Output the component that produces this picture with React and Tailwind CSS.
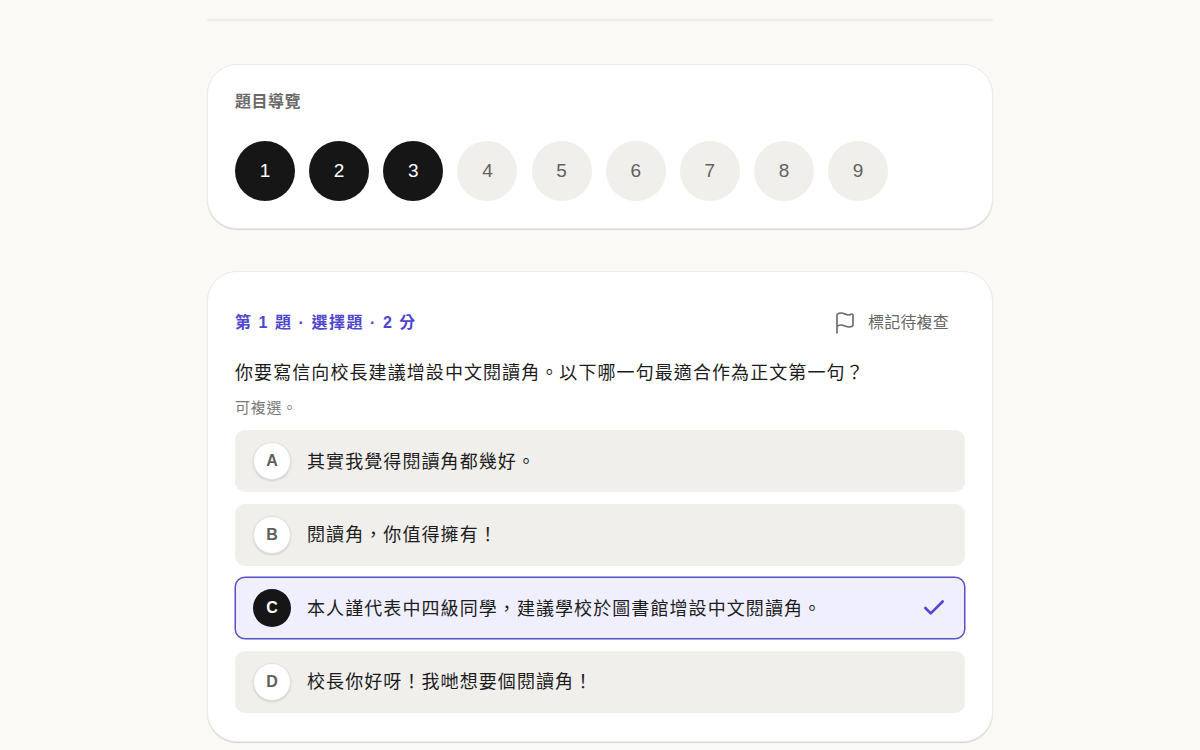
import React from 'react';
import { Flag, Check } from 'lucide-react';

const numbers = [1, 2, 3, 4, 5, 6, 7, 8, 9];
const options = [
  { key: 'A', text: '其實我覺得閱讀角都幾好。' },
  { key: 'B', text: '閱讀角\uFF0C你值得擁有\uFF01' },
  { key: 'C', text: '本人謹代表中四級同學\uFF0C建議學校於圖書館增設中文閱讀角。', selected: true },
  { key: 'D', text: '校長你好呀\uFF01我哋想要個閱讀角\uFF01' },
];

const Option = ({ option }) => (
  <div className={`flex items-center h-[62px] px-[17px] rounded-[10px] border ${option.selected ? 'bg-[#efeffd] border-[#5b4fc9] shadow-[0_0_0_0.5px_#5b4fc9]' : 'bg-[#f0efec] border-[#f0efec]'}`}>
    <div className={`flex items-center justify-center w-[38px] h-[38px] rounded-full text-[16px] font-semibold ${option.selected ? 'bg-[#161616] text-white' : 'bg-white text-[#5f5f5c] border border-[#e2e1de] shadow-[0_1px_2px_rgba(0,0,0,0.15)]'}`}>
      {option.key}
    </div>
    <span className="ml-4 flex-1 pt-[2px] text-[18px] text-[#1c1c1c] tracking-[1.08px]">{option.text}</span>
    {option.selected && <Check size={26} strokeWidth={2.4} className="text-[#5046d0]" />}
  </div>
);

const App = () => {
  return (
    <div className="h-[750px] overflow-hidden bg-[#faf9f5] font-['Liberation_Sans','Noto_Sans_CJK_TC',sans-serif]">
      <div className="w-[786px] mx-auto pt-[19px]">
        <div className="h-0.5 bg-[#efeeea]" />

        <div className="mt-[43px] h-[165px] bg-white border border-[#ecebe7] rounded-[30px] shadow-[0_1px_1px_rgba(0,0,0,0.14)] pt-[27px] px-[27px]">
          <h2 className="text-[16px] leading-5 font-semibold text-[#6a6a67] tracking-[0.5px]">題目導覽</h2>
          <div className="flex gap-[14.15px] mt-[29px]">
            {numbers.map(n => (
              <div key={n} className={`flex items-center justify-center w-[60px] h-[60px] rounded-full text-[19px] ${n <= 3 ? 'bg-[#161616] text-white' : 'bg-[#f0efec] text-[#62625f]'}`}>
                {n}
              </div>
            ))}
          </div>
        </div>

        <div className="mt-[42px] h-[471px] bg-white border border-[#ecebe7] rounded-[30px] shadow-[0_1px_1px_rgba(0,0,0,0.14)] pt-[27px] px-[27px]">
          <div className="flex items-center justify-between h-[48px]">
            <span className="text-[16px] font-semibold text-[#4f46cf] tracking-[1.55px]">第 1 題 · 選擇題 · 2 分</span>
            <div className="flex items-center gap-[11px] mr-4 text-[#666663]">
              <Flag size={24} strokeWidth={1.6} />
              <span className="text-[16px] tracking-[0.2px]">標記待複查</span>
            </div>
          </div>
          <p className="mt-[12px] text-[18px] leading-7 text-[#1c1c1c] tracking-[1.08px]">{'你要寫信向校長建議增設中文閱讀角。以下哪一句最適合作為正文第一句\uFF1F'}</p>
          <p className="mt-[11px] text-[15px] leading-5 text-[#7a7a77] tracking-[0.7px]">可複選。</p>
          <div className="flex flex-col gap-[11.5px] mt-[12px]">
            {options.map(o => <Option key={o.key} option={o} />)}
          </div>
        </div>
      </div>
    </div>
  );
};

export default App;
